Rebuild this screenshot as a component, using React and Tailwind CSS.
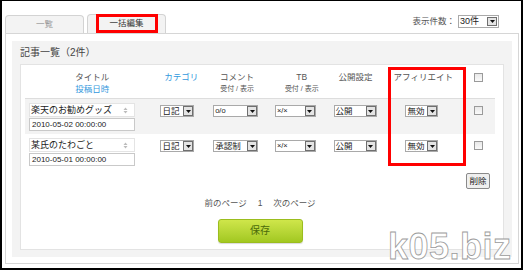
import React from 'react';

const FONT = 'font-["Liberation_Sans","Noto_Sans_CJK_JP",sans-serif]';

function Arrow() {
  return (
    <span className="flex w-[10px] shrink-0 items-center justify-center border border-[#6f6f6f] bg-[#e4e4e4]">
      <svg width="5" height="3" viewBox="0 0 5 3">
        <path d="M0 0H5L2.5 3Z" fill="#111" />
      </svg>
    </span>
  );
}

function Select({ label, width, small }) {
  return (
    <div className={`flex h-[12px] items-stretch border border-[#a9a9a9] bg-white ${width}`}>
      <span
        className={`flex-1 overflow-hidden whitespace-nowrap pl-[1px] text-[#222] ${
          small ? 'text-[7.5px] leading-[10px]' : 'text-[8.5px] leading-[10px]'
        }`}
      >
        {label}
      </span>
      <Arrow />
    </div>
  );
}

function Checkbox() {
  return <div className="h-[9px] w-[9px] border border-[#9a9a9a] bg-gradient-to-b from-[#e8e8e8] to-[#fafafa]" />;
}

function Spinner() {
  return (
    <svg width="5" height="7" viewBox="0 0 5 7" className="shrink-0">
      <path d="M0.5 3L2.5 0.5L4.5 3Z" fill="#bbb" />
      <path d="M0.5 4L2.5 6.5L4.5 4Z" fill="#bbb" />
    </svg>
  );
}

function Row({ title, date, comment, commentSmall, bg }) {
  return (
    <div className={`flex h-[35px] ${bg}`}>
      <div className="w-[135px] pl-[4px] pt-[4px]">
        <div className="flex h-[14px] w-[106px] items-center border border-[#e4e4e4] bg-white pl-[1px] pr-[6px] text-[9px] text-[#222]">
          <span className="flex-1 whitespace-nowrap leading-[12px]">{title}</span>
          <Spinner />
        </div>
        <div className="mt-[1px] h-[13px] w-[106px] border border-[#c9c9c9] bg-white pl-[2px] text-[8px] leading-[11px] text-[#222]">
          {date}
        </div>
      </div>
      <div className="w-[44px] pl-[1px] pt-[6px]">
        <Select label="日記" width="w-[34px]" />
      </div>
      <div className="w-[68px] pl-[10px] pt-[6px]">
        <Select label={comment} width="w-[45px]" small={commentSmall} />
      </div>
      <div className="w-[62px] pl-[4px] pt-[6px]">
        <Select label="×/×" width="w-[41px]" small />
      </div>
      <div className="w-[46px] pl-[1px] pt-[6px]">
        <Select label="公開" width="w-[43px]" />
      </div>
      <div className="w-[90px] pl-[27px] pt-[6px]">
        <Select label="無効" width="w-[33px]" />
      </div>
      <div className="w-[27px] pl-[6px] pt-[7px]">
        <Checkbox />
      </div>
    </div>
  );
}

export default function App() {
  return (
    <div className={`relative h-[271px] w-[525px] overflow-hidden bg-white ${FONT}`}>
      <div className="h-[270px] w-[523px] border-b-2 border-l-2 border-r-2 border-t border-black bg-white">
        <div className="flex h-[32px] items-end">
          <div className="ml-[3px] flex h-[18px] w-[79px] items-center justify-center rounded-t-[4px] border border-b-0 border-[#d3d3d3] bg-[#f3f3f3] text-[8.5px] text-[#9a9a9a]">
            一覧
          </div>
          <div className="ml-[3px] flex h-[19px] w-[79px] justify-center rounded-t-[4px] border border-b-0 border-[#d3d3d3] bg-[#f3f3f3]">
            <div className="-mt-px flex w-[62px] items-center justify-center border-[3px] border-[#ff0000] text-[8.5px] text-[#333]">
              一括編集
            </div>
          </div>
          <div className="mb-[5px] ml-auto mr-[22px] flex items-center self-end">
            <span className="mr-[3px] text-[8.5px] text-[#555]">表示件数：</span>
            <div className="flex h-[13px] w-[41px] items-stretch border border-[#a9a9a9] bg-white">
              <span className="flex-1 pl-[1px] text-[9px] leading-[11px] text-[#222]">30件</span>
              <span className="my-[1px] mr-[1px] flex w-[10px] items-center justify-center border border-[#6f6f6f] bg-[#e4e4e4]">
                <svg width="5" height="3" viewBox="0 0 5 3">
                  <path d="M0 0H5L2.5 3Z" fill="#111" />
                </svg>
              </span>
            </div>
          </div>
        </div>

        <div className="ml-[3px] mr-[2px] h-[231px] border border-[#d6d6d6] px-[6px] pt-[7px]">
          <div className="h-[216px] bg-[#f3f3f3] px-[8px] pt-[6px]">
            <div className="h-[17px] text-[10px] leading-[12px] text-[#444]">記事一覧（2件）</div>
            <div className="h-[186px] border border-[#e3e3e3] bg-white pl-[4px] pr-[8px] pt-[2px]">
              <div className="relative">
                <div className="flex h-[32px] border-b border-[#dddddd] text-center text-[8.5px] leading-[12px] text-[#555]">
                  <div className="w-[135px] pt-[4px]">
                    <div>タイトル</div>
                    <div className="text-[#3399dd]">投稿日時</div>
                  </div>
                  <div className="w-[44px] pt-[4px] text-[#3399dd]">カテゴリ</div>
                  <div className="w-[68px] pt-[4px]">
                    <div>コメント</div>
                    <div className="text-[7px]">受付 / 表示</div>
                  </div>
                  <div className="w-[62px] pt-[4px]">
                    <div>TB</div>
                    <div className="text-[7px]">受付 / 表示</div>
                  </div>
                  <div className="w-[46px] pt-[4px]">公開設定</div>
                  <div className="w-[90px] pt-[4px]">アフィリエイト</div>
                  <div className="w-[27px] pl-[6px] pt-[6px]">
                    <Checkbox />
                  </div>
                </div>
                <Row title="楽天のお勧めグッズ" date="2010-05-02 00:00:00" comment="o/o" commentSmall bg="bg-[#f3f3f3]" />
                <Row title="某氏のたわごと" date="2010-05-01 00:00:00" comment="承認制" bg="bg-white" />
                <div className="pointer-events-none absolute left-[363px] top-0 h-[99px] w-[78px] border-[3px] border-[#ff0000]" />
              </div>
              <div className="mt-[4px] flex justify-end pr-[5px]">
                <button className="h-[16px] w-[24px] rounded-[2px] border border-[#8a8a8a] bg-[#efefef] text-[8.5px] leading-[13px] text-[#222]">
                  削除
                </button>
              </div>
              <div className="mt-[8px] text-center text-[8.5px] text-[#555]">
                前のページ　 1 　次のページ
              </div>
              <div className="mt-[9px] flex justify-center">
                <button className="h-[24px] w-[85px] rounded-[3px] border border-[#9bbd1e] bg-gradient-to-b from-[#cfe64a] to-[#a2c820] text-[10px] text-[#4a6a0a] shadow-[0_1px_1px_rgba(0,0,0,0.15)]">
                  保存
                </button>
              </div>
            </div>
          </div>
        </div>
      </div>
      <div className="pointer-events-none absolute left-[388px] top-[227px] text-[36px] font-bold leading-[40px] tracking-[0.5px] text-white [-webkit-text-stroke:0.8px_#9a9a9a]">
        k05.biz
      </div>
    </div>
  );
}
